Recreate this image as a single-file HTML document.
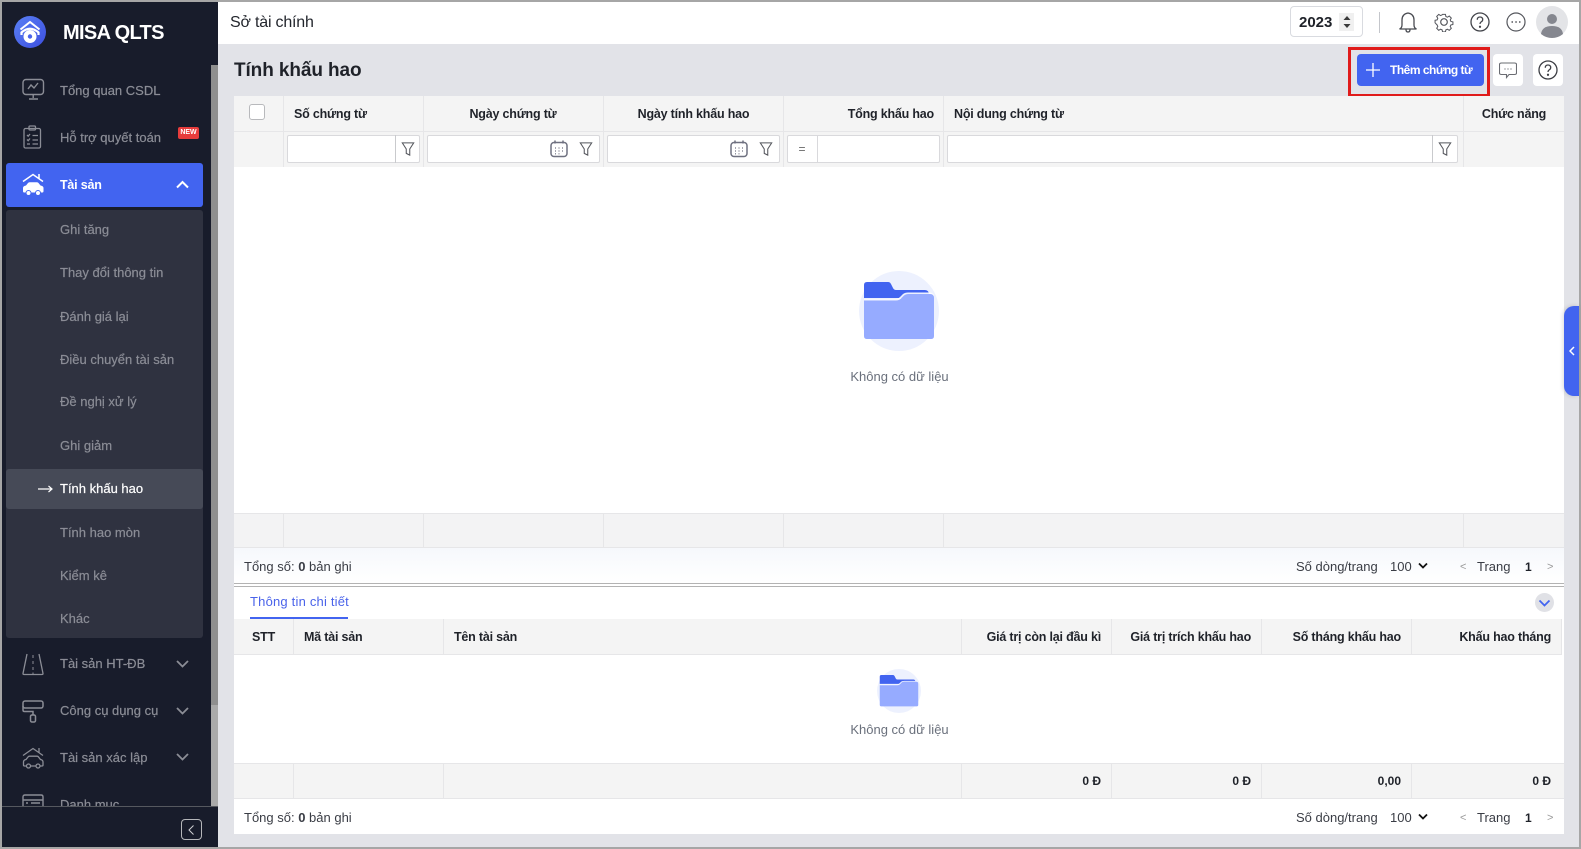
<!DOCTYPE html>
<html lang="vi"><head><meta charset="utf-8"><title>MISA QLTS</title>
<style>
html,body{margin:0;padding:0;width:1581px;height:849px;overflow:hidden;background:#a6a6a6}
*{box-sizing:border-box}
body{font-family:"Liberation Sans",sans-serif;font-size:13px;color:#1f2229;position:relative}
div,span.t,svg{position:absolute}
.t{white-space:nowrap;line-height:20px;height:20px}
.b{font-weight:bold;font-size:12.5px;letter-spacing:-.2px}
.r{text-align:right}
.c{text-align:center}
.m{color:#8b8d96;-webkit-text-stroke:.2px #8b8d96;left:60px}
.line{background:#e6e6e8}
.fi{background:#fff;border:1px solid #d9d9dc;border-radius:2px;height:28px;top:135px}
.g{color:#3a3d45}
</style></head><body>
<div id="app" style="left:2px;top:2px;width:1577px;height:845px;background:#e2e3e8"></div>

<!-- sidebar -->
<div style="left:2px;top:2px;width:216px;height:845px;background:#181c2b;overflow:hidden"></div>
<div style="left:211px;top:65px;width:7px;height:640px;background:#8f8f8f"></div>
<div style="left:211px;top:705px;width:7px;height:101px;background:#aaaaaa"></div>
<svg style="left:14px;top:16px" width="32" height="32" viewBox="0 0 32 32"><defs><linearGradient id="lg" x1="0" y1="0" x2="1" y2="1"><stop offset="0" stop-color="#5a80f5"/><stop offset="1" stop-color="#3d4fe0"/></linearGradient></defs><circle cx="16" cy="16" r="16" fill="url(#lg)"/><path d="M6.500 13.500L16 6l9.500 7.500" fill="none" stroke="#fff" stroke-width="2"/><path d="M7.500 19v-2.500Q16 9 24.500 16.500V19" fill="none" stroke="#fff" stroke-width="2.200"/><circle cx="16" cy="20.500" r="6.500" fill="#fff"/><circle cx="16" cy="20.500" r="2.200" fill="#4a63ea"/></svg>
<span class="t" style="left:63px;top:23px;font-size:20px;font-weight:bold;color:#fff;letter-spacing:-.65px">MISA QLTS</span>

<svg style="left:22px;top:78px" width="23" height="23" viewBox="0 0 23 23" fill="none" stroke="#8b8d96" stroke-width="1.400"><rect x="1" y="1.500" width="20.500" height="15" rx="3"/><path d="M6 11l3-4 3 3 4-5M11.200 17v3M7 21h9"/></svg>
<svg style="left:23px;top:125px" width="19" height="24" viewBox="0 0 19 24" fill="none" stroke="#8b8d96" stroke-width="1.300"><rect x="1" y="3.500" width="16.500" height="19.500" rx="1.500"/><rect x="6" y="1" width="6.500" height="4" rx="1"/><path d="M4 10l1.200 1.200L7 9M9.500 10.500H15M4 14.500l1.200 1.200L7 13.500M9.500 15H15M4 19h3M9.500 19H15"/></svg>
<svg style="left:22px;top:653px" width="22" height="23" viewBox="0 0 22 23" fill="none" stroke="#8b8d96" stroke-width="1.300"><path d="M5 1L1 20.500q0 1 1 1h18q1 0 1-1L17 1"/><path d="M11 2v3M11 8v3M11 14v3M11 19.500v2" stroke-width="1"/></svg>
<svg style="left:22px;top:700px" width="23" height="23" viewBox="0 0 23 23" fill="none" stroke="#8b8d96" stroke-width="1.500"><rect x="1" y="1" width="20" height="7" rx="2"/><path d="M1 6v4q0 1.500 1.500 1.500H11V15"/><rect x="8.500" y="15" width="5" height="7" rx="1.500"/></svg>
<svg style="left:22px;top:747px" width="23" height="23" viewBox="0 0 23 23" fill="none" stroke="#8b8d96" stroke-width="1.300"><path d="M1 8.500L11 1.500 21 8.500M17 1v5"/><path d="M1.500 18v-3q0-2 2.500-2.500l2-2.500q.6-.8 1.500-.8h7.500q1 0 1.500.8l2 2.500q2.500.5 2.500 2.500v3q0 1-1 1H2.500q-1 0-1-1z"/><circle cx="6.500" cy="19" r="2" fill="#181c2b"/><circle cx="16" cy="19" r="2" fill="#181c2b"/></svg>
<svg style="left:22px;top:794px" width="22" height="12" viewBox="0 0 22 12" fill="none" stroke="#8b8d96" stroke-width="1.400"><path d="M1 12V3q0-2 2-2h16q2 0 2 2v9M1 6h20M4 9h2M9 9h9"/></svg>

<span class="t m" style="top:81px">Tổng quan CSDL</span>
<span class="t m" style="top:128px">Hỗ trợ quyết toán</span>
<div style="left:178px;top:127px;width:21px;height:12px;background:#e73c3c;border-radius:2px;color:#fff;font-size:7px;font-weight:bold;line-height:12px;text-align:center">NEW</div>
<div style="left:6px;top:163px;width:197px;height:44px;background:#4264f0;border-radius:3px"></div>
<svg style="left:22px;top:173px" width="23" height="23" viewBox="0 0 23 23"><path d="M1 8.500L11 1.500 21 8.500M17 1v5" fill="none" stroke="#fff" stroke-width="1.500"/><path d="M1 18v-3q0-2 3-2.500l2-2.500q.6-.8 1.500-.8h7.500q1 0 1.500.8l2 2.500q3 .5 3 2.500v3q0 1.500-1 1.500H2q-1 0-1-1.500z" fill="#fff"/><circle cx="6.500" cy="20" r="2.500" fill="#fff" stroke="#4264f0" stroke-width="1"/><circle cx="16" cy="20" r="2.500" fill="#fff" stroke="#4264f0" stroke-width="1"/></svg>
<span class="t b" style="left:60px;top:175px;color:#fff">Tài sản</span>
<svg style="left:176px;top:180px" width="13" height="9" viewBox="0 0 13 9" fill="none" stroke="#fff" stroke-width="2"><path d="M1 7.500L6.500 2 12 7.500"/></svg>
<div style="left:6px;top:210px;width:197px;height:428px;background:#2f3240;border-radius:3px"></div>
<div style="left:6px;top:469px;width:197px;height:40px;background:#464a57;border-radius:3px"></div>
<span class="t m" style="top:220px">Ghi tăng</span>
<span class="t m" style="top:263px">Thay đổi thông tin</span>
<span class="t m" style="top:307px">Đánh giá lại</span>
<span class="t m" style="top:350px">Điều chuyển tài sản</span>
<span class="t m" style="top:392px">Đề nghị xử lý</span>
<span class="t m" style="top:436px">Ghi giảm</span>
<svg style="left:38px;top:484px" width="15" height="10" viewBox="0 0 15 10" fill="none" stroke="#fff" stroke-width="1.200"><path d="M0 5h14M10.500 2L14 5l-3.500 3"/></svg>
<span class="t" style="left:60px;top:479px;color:#fff;-webkit-text-stroke:.2px #fff">Tính khấu hao</span>
<span class="t m" style="top:523px">Tính hao mòn</span>
<span class="t m" style="top:566px">Kiểm kê</span>
<span class="t m" style="top:609px">Khác</span>
<span class="t m" style="top:654px">Tài sản HT-ĐB</span>
<span class="t m" style="top:701px">Công cụ dụng cụ</span>
<span class="t m" style="top:748px">Tài sản xác lập</span>
<span class="t m" style="top:795px;height:11px;overflow:hidden">Danh mục</span>
<svg style="left:176px;top:660px" width="13" height="8" viewBox="0 0 13 8" fill="none" stroke="#8b8d96" stroke-width="1.800"><path d="M1 1l5.500 5.500L12 1"/></svg>
<svg style="left:176px;top:707px" width="13" height="8" viewBox="0 0 13 8" fill="none" stroke="#8b8d96" stroke-width="1.800"><path d="M1 1l5.500 5.500L12 1"/></svg>
<svg style="left:176px;top:753px" width="13" height="8" viewBox="0 0 13 8" fill="none" stroke="#8b8d96" stroke-width="1.800"><path d="M1 1l5.500 5.500L12 1"/></svg>
<div style="left:2px;top:806px;width:216px;height:41px;background:#181c2b;border-top:1px solid #55585f"></div>
<div style="left:181px;top:819px;width:21px;height:21px;border:1px solid #b5b6ba;border-radius:4px"></div>
<svg style="left:188px;top:825px" width="7" height="10" viewBox="0 0 7 10" fill="none" stroke="#d0d1d4" stroke-width="1"><path d="M5.500 .5L1 5l4.500 4.500"/></svg>

<!-- top bar -->
<div style="left:218px;top:2px;width:1361px;height:42px;background:#fff"></div>
<span class="t" style="left:230px;top:13px;font-size:16px;color:#23262d;letter-spacing:-.2px">Sở tài chính</span>
<div style="left:1290px;top:6px;width:73px;height:31px;border:1px solid #d9dbe0;border-radius:4px;background:#fff"></div>
<span class="t" style="left:1299px;top:13px;font-size:15px;font-weight:bold">2023</span>
<div style="left:1339px;top:13px;width:15px;height:18px;background:#f0f0f0"></div>
<svg style="left:1342px;top:15px" width="10" height="14" viewBox="0 0 10 14" fill="#3a3a3a"><path d="M5 1l3.500 4h-7zM5 13L1.500 9h7z"/></svg>
<div style="left:1379px;top:12px;width:1px;height:21px;background:#c4c6cb"></div>
<svg style="left:1398px;top:11px" width="20" height="22" viewBox="0 0 20 22" fill="none" stroke="#4a4c52" stroke-width="1.300"><path d="M1.500 18q2.500-1 2.500-4V9q0-6 6-7q6 1 6 7v5q0 3 2.500 4zM8 18.500q0 2.500 2 2.500t2-2.500"/></svg>
<svg style="left:1434px;top:12px" width="20" height="20" viewBox="0 0 20 20" fill="none" stroke="#55575d" stroke-width="1.200"><path d="M8.300 1h3.400l.5 2.500 1.800.8 2.200-1.300 2.400 2.400-1.300 2.200.8 1.800 2.400.5v3l-2.400.6-.8 1.800 1.300 2.100-2.400 2.400-2.200-1.300-1.800.8-.5 2.400H8.300l-.5-2.400-1.800-.8-2.200 1.300-2.400-2.400 1.300-2.100-.8-1.800L-.5 11V8l2.400-.5.8-1.800-1.300-2.200L3.800 1.100 6 2.400l1.800-.8z" transform="translate(1.500 1.500) scale(.85)"/><circle cx="10" cy="10" r="3.300"/></svg>
<svg style="left:1470px;top:12px" width="20" height="20" viewBox="0 0 20 20" fill="none" stroke="#44464c" stroke-width="1.300"><circle cx="10" cy="10" r="9"/><path d="M7.300 7.800Q7.300 5 10 5t2.700 2.700Q12.700 9 11 10q-1 .6-1 2"/><circle cx="10" cy="14.800" r=".5" fill="#44464c"/></svg>
<svg style="left:1506px;top:12px" width="20" height="20" viewBox="0 0 20 20" fill="none" stroke="#55575d" stroke-width="1.200"><circle cx="10" cy="10" r="9"/><path d="M5.500 10h1.500M9.300 10h1.500M13 10h1.500" stroke-width="1.500"/></svg>
<svg style="left:1536px;top:6px" width="32" height="32" viewBox="0 0 32 32"><circle cx="16" cy="16" r="16" fill="#e3e4e7"/><circle cx="16" cy="13" r="5" fill="#85878f"/><path d="M5 28q1-8 11-8t11 8q-5 4-11 4t-11-4z" fill="#85878f"/></svg>

<!-- title row -->
<span class="t" style="left:234px;top:61px;font-size:19px;font-weight:bold;letter-spacing:-.1px">Tính khấu hao</span>
<div style="left:1348px;top:47px;width:142px;height:50px;border:3px solid #e01b1b"></div>
<div style="left:1357px;top:54px;width:127px;height:32px;background:#4264f0;border-radius:4px"></div>
<svg style="left:1366px;top:63px" width="14" height="14" viewBox="0 0 14 14" stroke="#fff" stroke-width="1.300"><path d="M7 0v14M0 7h14"/></svg>
<span class="t" style="left:1390px;top:60px;font-size:12px;font-weight:bold;color:#fff;letter-spacing:-.5px">Thêm chứng từ</span>
<div style="left:1493px;top:54px;width:30px;height:32px;background:#fff;border-radius:4px"></div>
<div style="left:1533px;top:54px;width:30px;height:32px;background:#fff;border-radius:4px"></div>
<svg style="left:1499px;top:62px" width="18" height="17" viewBox="0 0 18 17" fill="none" stroke="#6a6c72" stroke-width="1.100"><path d="M2.500 1h13q2 0 2 1.500v8.500q0 1.500-2 1.500H10l-2.500 3v-3h-5q-2 0-2-1.500V2.500q0-1.500 2-1.500z"/><path d="M5.500 7h1M8.500 7h1M11.500 7h1" stroke-width="1.300"/></svg>
<svg style="left:1538px;top:60px" width="20" height="20" viewBox="0 0 20 20" fill="none" stroke="#3d3f45" stroke-width="1.300"><circle cx="10" cy="10" r="9"/><path d="M7.300 7.800Q7.300 5 10 5t2.700 2.700Q12.700 9 11 10q-1 .6-1 2"/><circle cx="10" cy="14.800" r=".5" fill="#3d3f45"/></svg>

<!-- main grid -->
<div style="left:234px;top:96px;width:1330px;height:738px;background:#fff"></div>
<div style="left:234px;top:96px;width:1330px;height:71px;background:#f4f4f4"></div>
<div class="line" style="left:234px;top:131px;width:1330px;height:1px"></div>
<div class="line" style="left:283px;top:96px;width:1px;height:71px"></div>
<div class="line" style="left:423px;top:96px;width:1px;height:71px"></div>
<div class="line" style="left:603px;top:96px;width:1px;height:71px"></div>
<div class="line" style="left:783px;top:96px;width:1px;height:71px"></div>
<div class="line" style="left:943px;top:96px;width:1px;height:71px"></div>
<div class="line" style="left:1463px;top:96px;width:1px;height:71px"></div>
<div style="left:249px;top:104px;width:16px;height:16px;background:#fff;border:1px solid #b8b9bc;border-radius:3px"></div>
<span class="t b" style="left:294px;top:104px">Số chứng từ</span>
<span class="t b c" style="left:423px;top:104px;width:180px">Ngày chứng từ</span>
<span class="t b c" style="left:603px;top:104px;width:181px">Ngày tính khấu hao</span>
<span class="t b r" style="left:783px;top:104px;width:151px">Tổng khấu hao</span>
<span class="t b" style="left:954px;top:104px">Nội dung chứng từ</span>
<span class="t b c" style="left:1463px;top:104px;width:102px">Chức năng</span>

<div class="fi" style="left:287px;width:133px"></div>
<div style="left:395px;top:135px;width:1px;height:28px;background:#c9cacd"></div>
<div class="fi" style="left:427px;width:173px"></div>
<div class="fi" style="left:607px;width:173px"></div>
<div class="fi" style="left:787px;width:153px"></div>
<div style="left:817px;top:135px;width:1px;height:28px;background:#d9d9dc"></div>
<span class="t c" style="left:787px;top:139px;width:30px;color:#666;font-size:12px">=</span>
<div class="fi" style="left:947px;width:511px"></div>
<div style="left:1432px;top:135px;width:1px;height:28px;background:#c9cacd"></div>

<svg style="left:401px;top:142px" width="14" height="14" viewBox="0 0 15 16" fill="none" stroke="#55575d" stroke-width="1.200"><path d="M1 1h13L9.500 8v7l-4-2V8z"/></svg>
<svg style="left:579px;top:142px" width="14" height="14" viewBox="0 0 15 16" fill="none" stroke="#55575d" stroke-width="1.200"><path d="M1 1h13L9.500 8v7l-4-2V8z"/></svg>
<svg style="left:759px;top:142px" width="14" height="14" viewBox="0 0 15 16" fill="none" stroke="#55575d" stroke-width="1.200"><path d="M1 1h13L9.500 8v7l-4-2V8z"/></svg>
<svg style="left:1438px;top:142px" width="14" height="14" viewBox="0 0 15 16" fill="none" stroke="#55575d" stroke-width="1.200"><path d="M1 1h13L9.500 8v7l-4-2V8z"/></svg>
<svg style="left:550px;top:140px" width="18" height="18" viewBox="0 0 18 18" fill="none" stroke="#6f7180" stroke-width="1.500"><rect x="1" y="2.500" width="16" height="14" rx="3"/><path d="M5 .5v3M13 .5v3"/><path d="M5 8h1M8.500 8h1M12 8h1M5 11h1M8.500 11h1M12 11h1M5 13.800h1M8.500 13.800h1" stroke-width="1.200"/></svg>
<svg style="left:730px;top:140px" width="18" height="18" viewBox="0 0 18 18" fill="none" stroke="#6f7180" stroke-width="1.500"><rect x="1" y="2.500" width="16" height="14" rx="3"/><path d="M5 .5v3M13 .5v3"/><path d="M5 8h1M8.500 8h1M12 8h1M5 11h1M8.500 11h1M12 11h1M5 13.800h1M8.500 13.800h1" stroke-width="1.200"/></svg>

<!-- empty 1 -->
<svg style="left:859px;top:271px" width="80" height="80" viewBox="0 0 80 80"><circle cx="40" cy="40" r="40" fill="#edf1fe"/><path d="M5 14q0-3 3-3h21q2 0 3 2l2 4q1 2 3 2h29q4 0 4 5v3H5z" fill="#4264f0"/><path d="M5 28h31q3 0 5-2l3-3q2-1.500 5-1.500h21q5 0 5 4v3H5z" fill="#fff" opacity=".9"/><path d="M5 29.500h32q3 0 5-2l3-3q2-1.500 4-1.500h22q4 0 4 4V65q0 3-3 3H8q-3 0-3-3z" fill="#96abff"/></svg>
<span class="t c" style="left:800px;top:367px;width:199px;color:#6a707c">Không có dữ liệu</span>

<!-- summary 1 -->
<div style="left:234px;top:513px;width:1330px;height:35px;background:#f3f3f4;border-top:1px solid #e6e6e8;border-bottom:1px solid #e6e6e8"></div>
<div class="line" style="left:283px;top:513px;width:1px;height:34px"></div>
<div class="line" style="left:423px;top:513px;width:1px;height:34px"></div>
<div class="line" style="left:603px;top:513px;width:1px;height:34px"></div>
<div class="line" style="left:783px;top:513px;width:1px;height:34px"></div>
<div class="line" style="left:943px;top:513px;width:1px;height:34px"></div>
<div class="line" style="left:1463px;top:513px;width:1px;height:34px"></div>
<div style="left:234px;top:548px;width:1330px;height:35px;background:linear-gradient(#f6f8fc,#fff)"></div>
<div style="left:234px;top:583px;width:1330px;height:1px;background:#b3b3b3"></div>
<div style="left:234px;top:586px;width:1330px;height:1px;background:#b3b3b3"></div>
<span class="t g" style="left:244px;top:557px">Tổng số: <b>0</b> bản ghi</span>
<span class="t g" style="left:1296px;top:557px">Số dòng/trang</span>
<span class="t g" style="left:1390px;top:557px">100</span>
<svg style="left:1418px;top:562px" width="10" height="8" viewBox="0 0 10 8" fill="none" stroke="#111" stroke-width="1.800"><path d="M1 1.500l4 4 4-4"/></svg>
<span class="t" style="left:1460px;top:557px;color:#999;font-size:11px">&lt;</span>
<span class="t g" style="left:1477px;top:557px">Trang</span>
<span class="t" style="left:1525px;top:557px;font-size:12px;font-weight:bold">1</span>
<span class="t" style="left:1547px;top:557px;color:#999;font-size:11px">&gt;</span>

<!-- tab -->
<span class="t" style="left:250px;top:592px;color:#4a63ea;letter-spacing:.2px">Thông tin chi tiết</span>
<div style="left:250px;top:617px;width:98px;height:2px;background:#4264f0"></div>
<svg style="left:1535px;top:593px" width="19" height="19" viewBox="0 0 19 19" fill="none"><circle cx="9.500" cy="9.500" r="9.500" fill="#e0e1e6"/><path d="M4.500 7.500l5 5 5-5" stroke="#4264f0" stroke-width="1.800"/></svg>

<!-- detail table -->
<div style="left:234px;top:619px;width:1328px;height:36px;background:#f4f4f4;border-bottom:1px solid #e6e6e8"></div>
<div class="line" style="left:293px;top:619px;width:1px;height:35px"></div>
<div class="line" style="left:443px;top:619px;width:1px;height:35px"></div>
<div class="line" style="left:961px;top:619px;width:1px;height:35px"></div>
<div class="line" style="left:1111px;top:619px;width:1px;height:35px"></div>
<div class="line" style="left:1261px;top:619px;width:1px;height:35px"></div>
<div class="line" style="left:1411px;top:619px;width:1px;height:35px"></div>
<div class="line" style="left:1561px;top:619px;width:1px;height:35px"></div>
<span class="t b" style="left:252px;top:627px">STT</span>
<span class="t b" style="left:304px;top:627px">Mã tài sản</span>
<span class="t b" style="left:454px;top:627px">Tên tài sản</span>
<span class="t b r" style="left:901px;top:627px;width:200px">Giá trị còn lại đầu kì</span>
<span class="t b r" style="left:1051px;top:627px;width:200px">Giá trị trích khấu hao</span>
<span class="t b r" style="left:1201px;top:627px;width:200px">Số tháng khấu hao</span>
<span class="t b r" style="left:1351px;top:627px;width:200px">Khấu hao tháng</span>

<svg style="left:877px;top:669px" width="44" height="44" viewBox="0 0 80 80"><circle cx="40" cy="40" r="40" fill="#edf1fe"/><path d="M5 14q0-3 3-3h21q2 0 3 2l2 4q1 2 3 2h29q4 0 4 5v3H5z" fill="#4264f0"/><path d="M5 28h31q3 0 5-2l3-3q2-1.500 5-1.500h21q5 0 5 4v3H5z" fill="#fff" opacity=".9"/><path d="M5 29.500h32q3 0 5-2l3-3q2-1.500 4-1.500h22q4 0 4 4V65q0 3-3 3H8q-3 0-3-3z" fill="#96abff"/></svg>
<span class="t c" style="left:800px;top:720px;width:199px;color:#6a707c">Không có dữ liệu</span>

<div style="left:234px;top:763px;width:1330px;height:36px;background:#f4f4f4;border-top:1px solid #e6e6e8;border-bottom:1px solid #e6e6e8"></div>
<div class="line" style="left:293px;top:763px;width:1px;height:35px"></div>
<div class="line" style="left:443px;top:763px;width:1px;height:35px"></div>
<div class="line" style="left:961px;top:763px;width:1px;height:35px"></div>
<div class="line" style="left:1111px;top:763px;width:1px;height:35px"></div>
<div class="line" style="left:1261px;top:763px;width:1px;height:35px"></div>
<div class="line" style="left:1411px;top:763px;width:1px;height:35px"></div>
<span class="t r" style="left:1001px;top:771px;width:100px;font-size:12px;font-weight:bold">0 Đ</span>
<span class="t r" style="left:1151px;top:771px;width:100px;font-size:12px;font-weight:bold">0 Đ</span>
<span class="t r" style="left:1301px;top:771px;width:100px;font-size:12px;font-weight:bold">0,00</span>
<span class="t r" style="left:1451px;top:771px;width:100px;font-size:12px;font-weight:bold">0 Đ</span>

<span class="t g" style="left:244px;top:808px">Tổng số: <b>0</b> bản ghi</span>
<span class="t g" style="left:1296px;top:808px">Số dòng/trang</span>
<span class="t g" style="left:1390px;top:808px">100</span>
<svg style="left:1418px;top:813px" width="10" height="8" viewBox="0 0 10 8" fill="none" stroke="#111" stroke-width="1.800"><path d="M1 1.500l4 4 4-4"/></svg>
<span class="t" style="left:1460px;top:808px;color:#999;font-size:11px">&lt;</span>
<span class="t g" style="left:1477px;top:808px">Trang</span>
<span class="t" style="left:1525px;top:808px;font-size:12px;font-weight:bold">1</span>
<span class="t" style="left:1547px;top:808px;color:#999;font-size:11px">&gt;</span>

<!-- right handle -->
<div style="left:1564px;top:306px;width:15px;height:90px;background:#4264f0;border-radius:10px 0 0 10px;box-shadow:-1px 0 4px rgba(0,0,0,.15)"></div>
<svg style="left:1569px;top:346px" width="6" height="10" viewBox="0 0 6 10" fill="none" stroke="#fff" stroke-width="1.500"><path d="M5 1L1 5l4 4"/></svg>
</body></html>
